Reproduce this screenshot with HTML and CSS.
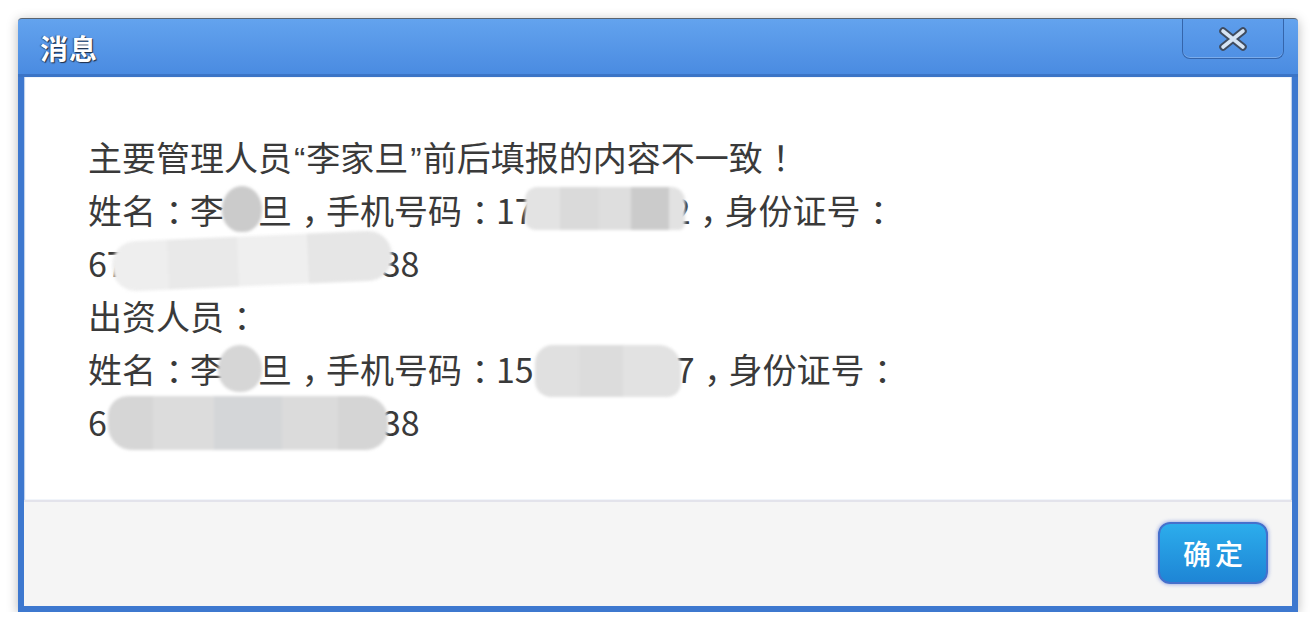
FILE: index.html
```html
<!DOCTYPE html>
<html lang="zh-CN">
<head>
<meta charset="utf-8">
<title>消息</title>
<link rel="stylesheet" href="styles.css">
</head>
<body>
<div class="window">
  <div class="titlebar">
    <span class="title">消息</span>
    <button class="close" aria-label="关闭">
      <svg width="30" height="24" viewBox="0 0 30 24">
        <path d="M5 4 L25 20 M25 4 L5 20" stroke="#3f4c60" stroke-width="7.5" stroke-linecap="round" fill="none"/>
        <path d="M5 4 L25 20 M25 4 L5 20" stroke="#d6e4f4" stroke-width="3.6" stroke-linecap="round" fill="none"/>
      </svg>
    </button>
  </div>
  <div class="frame">
    <div class="content">
      <p class="line">主要管理人员<span class="q">“</span>李家旦<span class="q">”</span>前后填报的内容不一致<span class="p">！</span></p>
      <p class="line">姓名<span class="p">：</span>李<span class="mask m-char"><i class="blob b-name1"></i></span>旦<span class="p">，</span>手机号码<span class="p">：</span>17<span class="mask m-phone1"><i class="blob b-phone1"></i></span>2<span class="p">，</span>身份证号<span class="p">：</span></p>
      <p class="line">67<span class="mask m-id1"><i class="blob b-id1"></i></span>38</p>
      <p class="line">出资人员<span class="p">：</span></p>
      <p class="line">姓名<span class="p">：</span>李<span class="mask m-char"><i class="blob b-name2"></i></span>旦<span class="p">，</span>手机号码<span class="p">：</span>15<span class="mask m-phone2"><i class="blob b-phone2"></i></span>7<span class="p">，</span>身份证号<span class="p">：</span></p>
      <p class="line">6<span class="mask m-id2"><i class="blob b-id2"></i></span>38</p>
    </div>
    <div class="footer">
      <button class="ok">确定</button>
    </div>
  </div>
</div>
</body>
</html>
```
FILE: styles.css
```css
html, body {
  margin: 0;
  padding: 0;
  background: #ffffff;
}
body {
  font-family: "Noto Sans CJK SC", "Noto Sans", sans-serif;
}
.window {
  margin: 18px 0 0 18px;
  width: 1280px;
  box-shadow: 0 2px 12px rgba(0, 0, 0, 0.28);
  border-radius: 4px 4px 0 0;
}
.titlebar {
  box-sizing: border-box;
  height: 59px;
  display: flex;
  align-items: center;
  justify-content: space-between;
  padding: 0 14px 0 22px;
  background: linear-gradient(#63a3ee, #4a8be1);
  border-top: 1px solid #5a6470;
  border-bottom: 3px solid #3b74c6;
  border-radius: 4px 4px 0 0;
}
.title {
  font-size: 28px;
  font-weight: 700;
  color: #ffffff;
  text-shadow: 1px 1px 1px #1f2d45, -1px 0 1px rgba(30, 45, 70, 0.6);
  letter-spacing: 1px;
  margin-top: 2px;
}
.close {
  align-self: flex-start;
  box-sizing: border-box;
  width: 102px;
  height: 40px;
  margin: 0;
  padding: 0;
  display: flex;
  align-items: center;
  justify-content: center;
  background: linear-gradient(#5e9eec, #4f90e4);
  border: 1px solid #3565ab;
  border-top: none;
  border-radius: 0 0 8px 8px;
  box-shadow: inset 0 -1px 0 rgba(255, 255, 255, 0.25);
}
.frame {
  border: 6px solid #3d78cf;
  border-top: none;
}
.content {
  background: #ffffff;
  padding: 53px 0 52px 64px;
  box-shadow: inset 1px 0 1px #b9cdec, inset -1px 0 1px #b9cdec;
}
.line {
  margin: 0;
  height: 53px;
  font-family: "Noto Sans CJK SC", sans-serif;
  font-size: 34px;
  line-height: 53px;
  color: #3a3a3a;
  white-space: nowrap;
}
.q {
  font-family: "Liberation Sans", sans-serif;
  padding: 0 1px 0 2px;
}
.p {
  font-feature-settings: "halt" 1;
  padding: 0 0.22em 0 0.28em;
}
.mask {
  display: inline-block;
  position: relative;
  height: 1em;
}
.m-char { width: 1em; }
.m-phone1 { width: 138px; }
.m-phone2 { width: 142px; }
.m-id1 { width: 256px; }
.m-id2 { width: 275px; }
.blob {
  position: absolute;
  display: block;
  filter: blur(1.6px);
}
.b-name1 {
  left: -2px;
  top: -4px;
  width: 40px;
  height: 46px;
  border-radius: 50% 50% 46% 46%;
  background: #cbcbcb;
}
.b-name2 {
  left: -6px;
  top: -4px;
  width: 44px;
  height: 47px;
  border-radius: 50% 50% 46% 46%;
  background: #d6d6d6;
}
.b-phone1 {
  left: -9px;
  top: -3px;
  width: 160px;
  height: 43px;
  border-radius: 12px 14px 6px 10px;
  background: linear-gradient(90deg, #e3e3e3 0 22%, #dadada 22% 46%, #dedede 46% 66%, #cbcbcb 66% 90%, #e2e2e2 90% 100%);
}
.b-phone2 {
  left: 1px;
  top: -4px;
  width: 146px;
  height: 52px;
  border-radius: 18px 22px 14px 16px;
  background: linear-gradient(90deg, #e0e0e0 0 30%, #dcdcdc 30% 60%, #e2e2e2 60% 100%);
}
.b-id1 {
  left: -14px;
  top: -7px;
  width: 280px;
  height: 50px;
  border-radius: 24px;
  transform: rotate(-2.5deg);
  background: linear-gradient(90deg, #eeeeee 0 20%, #e9e9e9 20% 45%, #efefef 45% 70%, #e6e6e6 70% 100%);
}
.b-id2 {
  left: 1px;
  top: -6px;
  width: 280px;
  height: 54px;
  border-radius: 20px 24px 22px 24px;
  background: linear-gradient(90deg, #d6d6d6 0 16%, #dcdcdc 16% 38%, #d4d6d8 38% 62%, #dbdbdb 62% 82%, #d5d5d5 82% 100%);
}
.footer {
  box-sizing: border-box;
  height: 106px;
  display: flex;
  justify-content: flex-end;
  align-items: flex-start;
  padding: 20px 24px 0 0;
  background: #f5f5f5;
  border-top: 2px solid #e3e3eb;
}
.ok {
  box-sizing: border-box;
  width: 110px;
  height: 62px;
  margin: 0;
  padding: 0 0 0 4px;
  border: 2px solid #4570cc;
  border-radius: 12px;
  background: linear-gradient(#2cadec, #1e85d5);
  box-shadow: 0 0 4px rgba(70, 100, 210, 0.65);
  color: #ffffff;
  font-family: "Noto Sans CJK SC", sans-serif;
  font-size: 28px;
  font-weight: 500;
  letter-spacing: 4px;
}
```
